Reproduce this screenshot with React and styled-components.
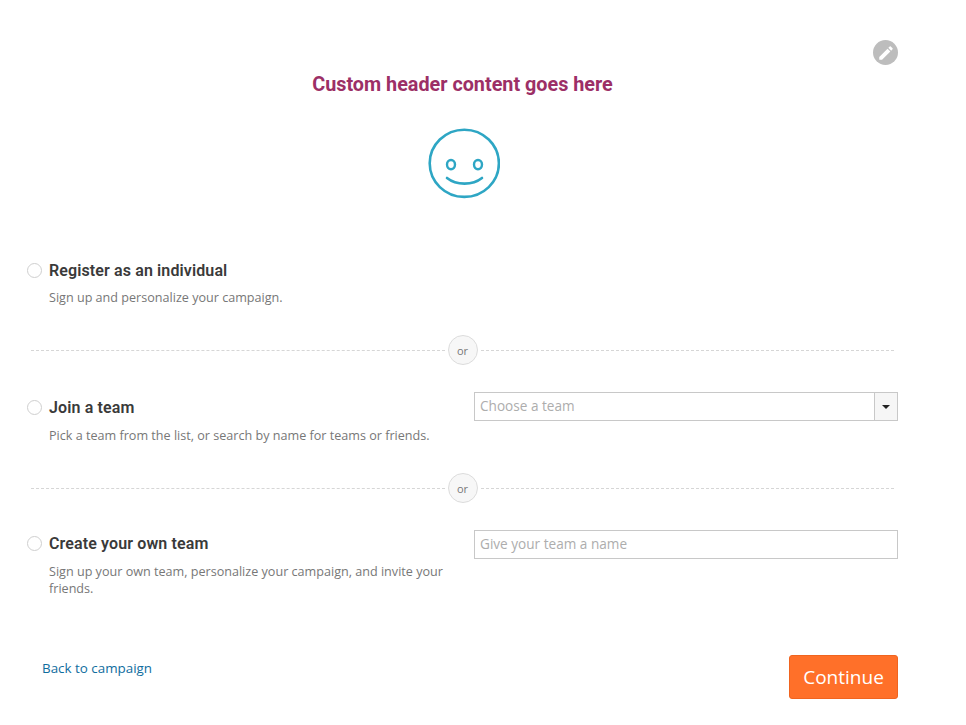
import React from 'react';
import styled, { createGlobalStyle } from 'styled-components';

const Global = createGlobalStyle`
  html, body { margin: 0; padding: 0; background: #fff; }
  body { font-family: "Open Sans", sans-serif; }
`;

const Page = styled.div`
  position: relative;
  width: 966px;
  height: 725px;
  box-sizing: border-box;
  padding: 73px 68px 0 27px;
  overflow: hidden;
`;

const EditButton = styled.div`
  position: absolute;
  top: 40px;
  left: 873px;
  width: 25px;
  height: 25px;
  border-radius: 50%;
  background: #bdbdbd;
  display: flex;
  align-items: center;
  justify-content: center;
`;

const Header = styled.header`
  display: flex;
  flex-direction: column;
  align-items: center;
  height: 176px;
`;

const Title = styled.h1`
  margin: 0;
  font-family: Roboto, sans-serif;
  font-size: 19.8px;
  line-height: 24px;
  font-weight: 700;
  color: #9c2f66;
`;

const Smiley = styled.svg`
  display: block;
  margin: 31px 0 0 3px;
  width: 72px;
  height: 71px;
`;

const Option = styled.section`
  display: grid;
  grid-template-columns: 447px 424px;
  height: ${p => p.$height}px;
`;

const Left = styled.div`
  display: flex;
  flex-direction: column;
`;

const Heading = styled.div`
  display: flex;
  align-items: center;
  gap: 7px;
  height: 24px;
  margin-top: ${p => p.$top || 0}px;
`;

const Radio = styled.span`
  width: 13px;
  height: 13px;
  margin-top: 1px;
  border: 1px solid #cfcfcf;
  border-radius: 50%;
  background: #fff;
`;

const Label = styled.label`
  font-family: Roboto, sans-serif;
  font-size: 16px;
  font-weight: 600;
  letter-spacing: 0.12px;
  color: #3a3a3a;
`;

const Hint = styled.p`
  margin: ${p => p.$gap}px 0 0 22px;
  width: 410px;
  font-size: 12.6px;
  line-height: 17px;
  color: #777;
`;

const Divider = styled.div`
  display: flex;
  align-items: center;
  gap: 3px;
  height: 30px;
  margin-left: 4px;
  width: 863px;
`;

const Dash = styled.span`
  flex: 1;
  border-top: 1px dashed #d6d6d6;
`;

const Or = styled.span`
  width: 28px;
  height: 28px;
  border: 1px solid #dcdcdc;
  border-radius: 50%;
  background: #f7f7f7;
  color: #777;
  font-size: 11px;
  display: flex;
  align-items: center;
  justify-content: center;
`;

const Field = styled.div`
  display: flex;
  height: 29px;
  box-sizing: border-box;
  border: 1px solid #c8c8c8;
  align-items: stretch;
  margin-top: ${p => p.$top || 0}px;
`;

const Placeholder = styled.span`
  flex: 1;
  padding-left: 5px;
  font-size: 13.6px;
  line-height: 26px;
  color: #adadad;
`;

const Caret = styled.span`
  width: 22px;
  border-left: 1px solid #c8c8c8;
  background: #f6f6f6;
  display: flex;
  align-items: center;
  justify-content: center;
  &::after {
    content: '';
    border-left: 4px solid transparent;
    border-right: 4px solid transparent;
    border-top: 4px solid #222;
  }
`;

const Footer = styled.footer`
  display: flex;
  justify-content: space-between;
  align-items: flex-start;
  margin-left: 15px;
`;

const BackLink = styled.a`
  font-size: 13.4px;
  line-height: 20px;
  margin-top: 3px;
  color: #0f6d9e;
`;

const ContinueButton = styled.button`
  width: 109px;
  height: 44px;
  border: 1px solid #f0641f;
  border-radius: 3px;
  background: #ff7029;
  color: #fff;
  font-family: "Open Sans", sans-serif;
  font-size: 19px;
  padding: 0;
`;

export default function App() {
  return (
    <Page>
      <Global />
      <EditButton>
        <svg width="18" height="18" viewBox="0 0 24 24" fill="#fff">
          <path d="M3 17.25V21h3.75L17.81 9.94l-3.75-3.75L3 17.25zM20.71 7.04a1 1 0 0 0 0-1.41l-2.34-2.34a1 1 0 0 0-1.41 0l-1.83 1.83 3.75 3.75 1.83-1.83z" />
        </svg>
      </EditButton>
      <Header>
        <Title>Custom header content goes here</Title>
        <Smiley viewBox="0 0 72 71" fill="none" stroke="#2ea6c4">
          <ellipse cx="36.3" cy="35.3" rx="34.6" ry="33.6" strokeWidth="2.6" />
          <ellipse cx="23" cy="36.6" rx="4" ry="4.6" strokeWidth="2.4" />
          <ellipse cx="50" cy="36.6" rx="4" ry="4.6" strokeWidth="2.4" />
          <path d="M19 50c5 4 11 5.6 17.5 5.6S49 54 54 50" strokeWidth="2.6" strokeLinecap="round" />
        </Smiley>
      </Header>

      <Option $height="86">
        <Left>
          <Heading $top="9">
            <Radio />
            <Label>Register as an individual</Label>
          </Heading>
          <Hint $gap="7">Sign up and personalize your campaign.</Hint>
        </Left>
      </Option>
      <Divider><Dash /><Or>or</Or><Dash /></Divider>

      <Option $height="108">
        <Left>
          <Heading $top="30">
            <Radio />
            <Label>Join a team</Label>
          </Heading>
          <Hint $gap="8">Pick a team from the list, or search by name for teams or friends.</Hint>
        </Left>
        <div>
          <Field $top="27">
            <Placeholder>Choose a team</Placeholder>
            <Caret />
          </Field>
        </div>
      </Option>
      <Divider><Dash /><Or>or</Or><Dash /></Divider>

      <Option $height="152">
        <Left>
          <Heading $top="28">
            <Radio />
            <Label>Create your own team</Label>
          </Heading>
          <Hint $gap="8">Sign up your own team, personalize your campaign, and invite your friends.</Hint>
        </Left>
        <div>
          <Field $top="27">
            <Placeholder>Give your team a name</Placeholder>
          </Field>
        </div>
      </Option>

      <Footer>
        <BackLink>Back to campaign</BackLink>
        <ContinueButton>Continue</ContinueButton>
      </Footer>
    </Page>
  );
}
